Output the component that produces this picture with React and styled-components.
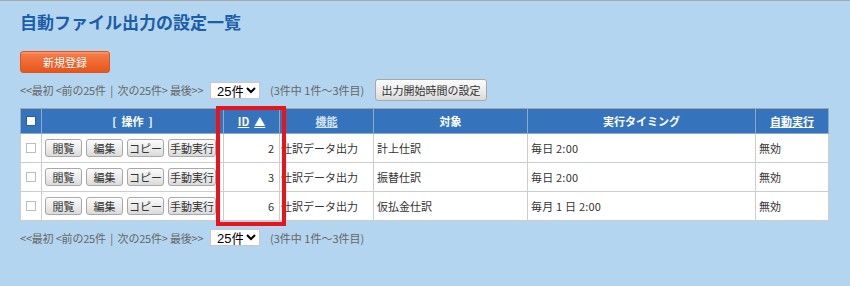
import React from "react";
import styled, { createGlobalStyle } from "styled-components";

const Global = createGlobalStyle`
  html, body { margin: 0; padding: 0; }
  body {
    background: #b3d5ef;
    border-top: 1px solid #a9a9a9;
    font-family: "Noto Sans CJK JP", "Noto Sans", sans-serif;
    color: #333;
  }
`;

const Page = styled.div`
  padding: 0 0 20px 20px;
  width: 808px;
`;

const Title = styled.h1`
  margin: 0;
  padding-top: 9px;
  font-size: 17px;
  line-height: 24px;
  font-weight: bold;
  color: #1b5da9;
`;

const NewButton = styled.button`
  display: block;
  margin-top: 17px;
  width: 90px;
  height: 22px;
  border: 1px solid #d9561e;
  border-radius: 3px;
  background: linear-gradient(#f8a27a 0%, #f47a45 12%, #f06a31 50%, #e6561c 100%);
  color: #fff;
  font-family: inherit;
  font-size: 11px;
  padding: 0;
  text-shadow: 0 0 1px rgba(150, 50, 0, 0.5);
`;

const Pager = styled.div`
  display: flex;
  align-items: center;
  height: ${(p) => p.$h}px;
  margin-top: ${(p) => p.$mt}px;
  font-size: 11px;
  color: #666;
`;

const PagerLinks = styled.span`
  width: 190px;
  white-space: pre;
  letter-spacing: -0.2px;
`;

const Count = styled.select`
  width: 50px;
  height: 17px;
  font-family: "Liberation Sans", "Noto Sans CJK JP", sans-serif;
  font-size: 13px;
  color: #000;
  background: #fff;
  border: 1px solid #c8c8c8;
  border-radius: 0;
  padding: 0 0 0 2px;
`;

const PagerInfo = styled.span`
  margin-left: 10px;
  width: 105px;
  white-space: pre;
`;

const GrayButton = styled.button`
  height: ${(p) => p.$h || 18}px;
  width: ${(p) => p.$w}px;
  padding: 0;
  border: 1px solid #a8a8a8;
  border-radius: 3px;
  background: linear-gradient(#fbfbfb, #e9e9e9 60%, #dadada);
  font-family: inherit;
  font-size: 11px;
  color: #333;
  white-space: nowrap;
  box-shadow: inset 0 1px 0 #fff;
`;

const TableWrap = styled.div`
  position: relative;
  margin-top: 7px;
`;

const Table = styled.table`
  width: 808px;
  table-layout: fixed;
  border-collapse: collapse;
  border: 1px solid #a3a3a3;
  font-size: 11px;
`;

const Th = styled.th`
  height: 24px;
  padding: 0;
  background: #3574bd;
  color: #fff;
  font-weight: bold;
  font-size: 11px;
  text-align: center;
  white-space: pre;
  border: 1px solid #8fa9c8;
  border-top-color: #a3a3a3;
`;

const SortLink = styled.a`
  color: ${(p) => (p.$muted ? "#d6e4f5" : "#fff")};
  text-decoration: underline;
`;

const Arrow = styled.span`
  margin-left: 5px;
`;

const Td = styled.td`
  height: 28px;
  padding: 0 ${(p) => (p.$right ? "5px" : "3px")} 0 ${(p) => p.$pl ?? 3}px;
  background: #fff;
  border: 1px solid #cdcdcd;
  color: #333;
  text-align: ${(p) => (p.$right ? "right" : "left")};
  white-space: nowrap;
  overflow: hidden;
`;

const Box = styled.span`
  display: block;
  margin-left: 5px;
  width: 10px;
  height: 10px;
  background: #fff;
  border: 1px solid ${(p) => (p.$head ? "#2a5f9e" : "#bdbdbd")};
  box-sizing: border-box;
`;

const Actions = styled.div`
  display: flex;
  gap: 4px;
`;

const Timing = styled.span`
  white-space: pre;
  letter-spacing: 0.2px;
`;

const Highlight = styled.div`
  position: absolute;
  left: 196px;
  top: -2px;
  width: 70px;
  height: 120px;
  border: 4px solid #e8141b;
  box-sizing: border-box;
  pointer-events: none;
`;

const rows = [
  { id: 2, kind: "仕訳データ出力", target: "計上仕訳", timing: "毎日 2:00", auto: "無効" },
  { id: 3, kind: "仕訳データ出力", target: "振替仕訳", timing: "毎日 2:00", auto: "無効" },
  { id: 6, kind: "仕訳データ出力", target: "仮払金仕訳", timing: "毎月 1 日 2:00", auto: "無効" },
];

function PagerBar({ mt, h, withButton }) {
  return (
    <Pager $mt={mt} $h={h}>
      <PagerLinks>{"<<最初 <前の25件  |  次の25件> 最後>>"}</PagerLinks>
      <Count defaultValue="25">
        <option value="25">25件</option>
      </Count>
      <PagerInfo>{"(3件中 1件～3件目)"}</PagerInfo>
      {withButton && (
        <GrayButton $w={112} $h={22}>
          出力開始時間の設定
        </GrayButton>
      )}
    </Pager>
  );
}

export default function App() {
  return (
    <>
      <Global />
      <Page>
        <Title>自動ファイル出力の設定一覧</Title>
        <NewButton>新規登録</NewButton>
        <PagerBar mt={6} h={22} withButton />
        <TableWrap>
          <Table>
            <colgroup>
              <col style={{ width: 21 }} />
              <col style={{ width: 182 }} />
              <col style={{ width: 56 }} />
              <col style={{ width: 94 }} />
              <col style={{ width: 154 }} />
              <col style={{ width: 228 }} />
              <col style={{ width: 73 }} />
            </colgroup>
            <thead>
              <tr>
                <Th>
                  <Box $head />
                </Th>
                <Th>{"[  操作  ]"}</Th>
                <Th>
                  <SortLink>
                    ID<Arrow>▲</Arrow>
                  </SortLink>
                </Th>
                <Th>
                  <SortLink $muted>機能</SortLink>
                </Th>
                <Th>対象</Th>
                <Th>実行タイミング</Th>
                <Th>
                  <SortLink>自動実行</SortLink>
                </Th>
              </tr>
            </thead>
            <tbody>
              {rows.map((r) => (
                <tr key={r.id}>
                  <Td $pl={0}>
                    <Box />
                  </Td>
                  <Td>
                    <Actions>
                      <GrayButton $w={37}>閲覧</GrayButton>
                      <GrayButton $w={37}>編集</GrayButton>
                      <GrayButton $w={37}>コピー</GrayButton>
                      <GrayButton $w={48}>手動実行</GrayButton>
                    </Actions>
                  </Td>
                  <Td $right>{r.id}</Td>
                  <Td $pl={1}>{r.kind}</Td>
                  <Td>{r.target}</Td>
                  <Td>
                    <Timing>{r.timing}</Timing>
                  </Td>
                  <Td>{r.auto}</Td>
                </tr>
              ))}
            </tbody>
          </Table>
          <Highlight />
        </TableWrap>
        <PagerBar mt={7} h={19} />
      </Page>
    </>
  );
}
